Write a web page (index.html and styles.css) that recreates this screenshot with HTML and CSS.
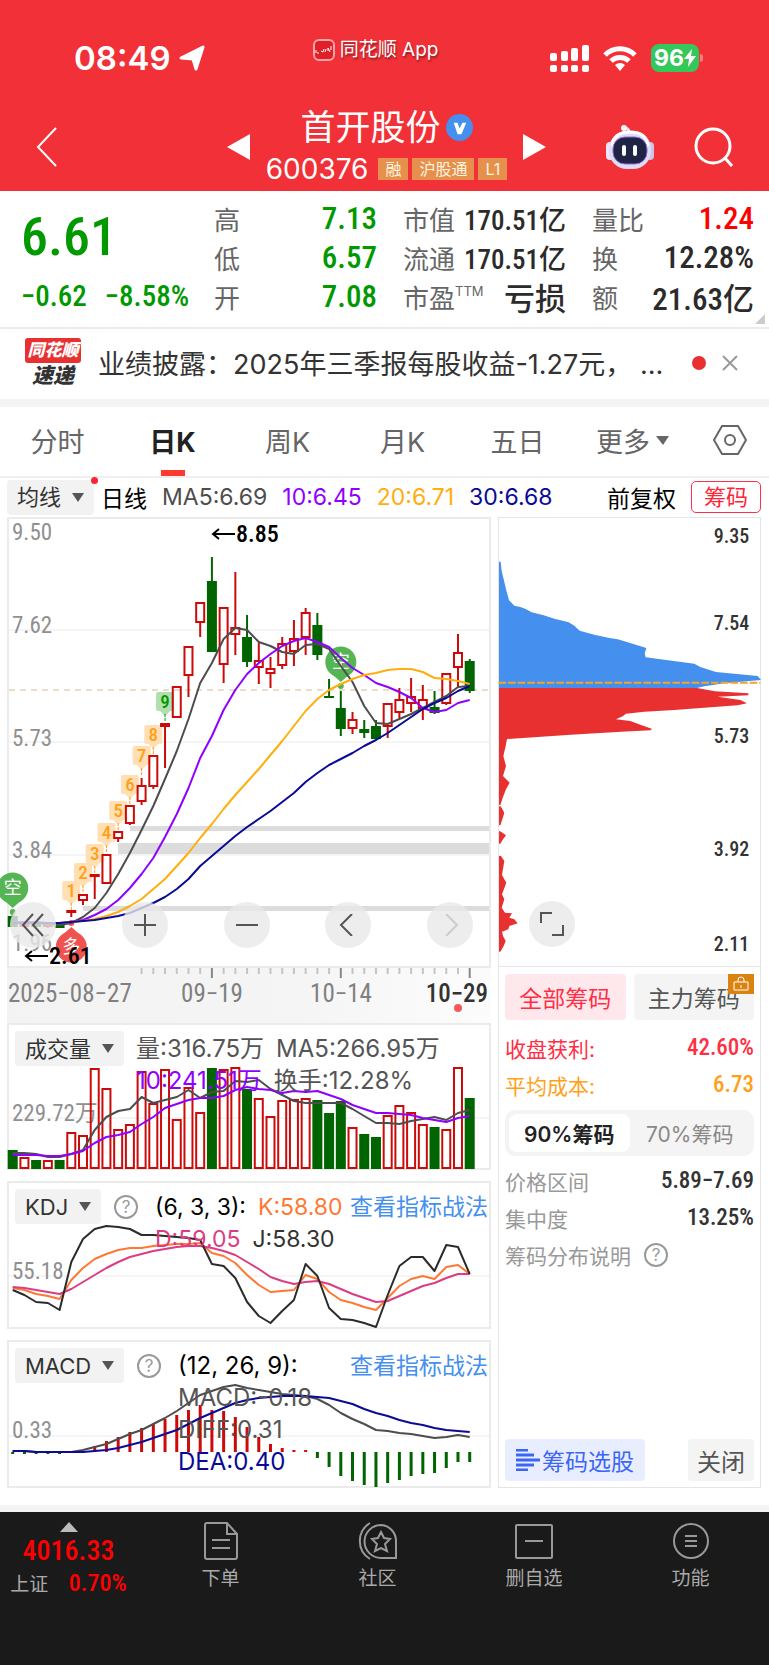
FILE: index.html
```html
<!DOCTYPE html>
<html lang="zh-CN">
<head>
    <meta charset="UTF-8">
    <meta name="viewport" content="width=device-width, initial-scale=1.0">
    <title>首开股份 600376</title>
    <link rel="stylesheet" href="styles.css">
</head>
<body>
    <header class="top">
        <div class="status">
            <div class="clock">08:49
                <svg width="26" height="26" viewBox="0 0 26 26"><path d="M24 2 17 24 14 14 2 13Z" fill="#fff" stroke="#fff" stroke-width="3" stroke-linejoin="round"/></svg>
            </div>
            <div class="app-name">
                <svg width="22" height="22" viewBox="0 0 22 22"><rect x="1" y="1" width="20" height="20" rx="5" fill="#e02028" stroke="#f9a5a8" stroke-width="2"/><path d="M3 14v-3M5 15v-2M8 12l2 1 1-3M12 13l1-3M15 12V9l2 4M18 7v4" stroke="#fff" stroke-width="1" fill="none"/></svg>
                <span>同花顺 App</span>
            </div>
            <div class="status-icons">
                <svg width="39" height="27" viewBox="0 0 39 27" fill="#fff">
                    <rect x="0" y="8" width="7" height="8" rx="2"/><rect x="11" y="6" width="7" height="10" rx="2"/><rect x="21" y="3" width="7" height="13" rx="2"/><rect x="32" y="0" width="7" height="16" rx="2"/>
                    <rect x="0" y="20" width="7" height="7" rx="2"/><rect x="11" y="20" width="7" height="7" rx="2"/><rect x="21" y="20" width="7" height="7" rx="2"/><rect x="32" y="20" width="7" height="7" rx="2"/>
                </svg>
                <svg width="34" height="25" viewBox="0 0 34 25" fill="none" stroke="#fff" stroke-width="5"><path d="M2 9a21 21 0 0 1 30 0"/><path d="M8 15a13 13 0 0 1 18 0"/><path d="M17 25l-5-6a7 7 0 0 1 10 0z" fill="#fff" stroke="none"/></svg>
                <span class="battery">96<svg width="12" height="18" viewBox="0 0 12 18"><path d="M8 0 0 10h5l-1 8 8-11H7z" fill="#fff"/></svg></span>
            </div>
        </div>
        <nav class="title-bar">
            <button class="icon-btn back" aria-label="返回"><svg width="22" height="40" viewBox="0 0 22 40"><path d="M20 1 2 20 20 39" fill="none" stroke="#fff" stroke-width="2"/></svg></button>
            <button class="icon-btn prev" aria-label="上一只"><svg width="23" height="26" viewBox="0 0 23 26"><path d="M23 0v26L0 13z" fill="#fff"/></svg></button>
            <div class="stock">
                <h1>首开股份
                    <svg width="27" height="27" viewBox="0 0 28 28"><circle cx="14" cy="14" r="14" fill="#458fee"/><path d="M8 9h4l2 6 3-6h4l-5 12h-4z" fill="#fff"/></svg>
                </h1>
                <div class="code"><span>600376</span><i>融</i><i>沪股通</i><i>L1</i></div>
            </div>
            <button class="icon-btn next" aria-label="下一只"><svg width="23" height="26" viewBox="0 0 23 26"><path d="M0 0v26l23-13z" fill="#fff"/></svg></button>
            <button class="icon-btn robot" aria-label="智能助手">
                <svg width="48" height="46" viewBox="0 0 48 46">
                    <path d="M23 9c0-3-1-5-4-5" fill="none" stroke="#e7e6f5" stroke-width="3"/><circle cx="18" cy="4" r="3" fill="#f8f7ff"/>
                    <rect x="0" y="18" width="8" height="18" rx="4" fill="#e9e8fa"/><rect x="40" y="18" width="8" height="18" rx="4" fill="#c9c6ea"/>
                    <rect x="3" y="7" width="42" height="38" rx="18" fill="#dfddf3"/><path d="M6 22C7 12 14 8 24 8s17 4 18 14" fill="none" stroke="#fff" stroke-width="3"/>
                    <rect x="7" y="13" width="34" height="27" rx="12" fill="#1f2344" stroke="#8d6be0" stroke-width="1"/>
                    <rect x="16" y="21" width="4" height="11" rx="2" fill="#fff"/><rect x="27" y="21" width="4" height="11" rx="2" fill="#fff"/>
                </svg>
            </button>
            <button class="icon-btn search" aria-label="搜索"><svg width="40" height="40" viewBox="0 0 40 40" fill="none" stroke="#fff" stroke-width="3"><circle cx="19" cy="19" r="17"/><path d="M31 31l7 8"/></svg></button>
        </nav>
    </header>

    <section class="quote">
        <div class="price">
            <strong>6.61</strong>
            <div><span>−0.62</span><span>−8.58%</span></div>
        </div>
        <dl class="down">
            <dt>高</dt><dd>7.13</dd>
            <dt>低</dt><dd>6.57</dd>
            <dt>开</dt><dd>7.08</dd>
        </dl>
        <dl class="cap">
            <dt>市值</dt><dd class="small">170.51亿</dd>
            <dt>流通</dt><dd class="small">170.51亿</dd>
            <dt>市盈<sup>TTM</sup></dt><dd>亏损</dd>
        </dl>
        <dl class="turnover">
            <dt>量比</dt><dd class="up">1.24</dd>
            <dt>换</dt><dd>12.28%</dd>
            <dt>额</dt><dd>21.63亿</dd>
        </dl>
        <span class="corner"></span>
    </section>

    <section class="news">
        <div class="news-logo"><b>同花顺</b><em>速递</em></div>
        <a href="#">业绩披露：2025年三季报每股收益-1.27元， …</a>
        <span class="unread"></span>
        <button class="icon-btn" aria-label="关闭公告"><svg width="16" height="16" viewBox="0 0 16 16"><path d="M1 1l14 14M15 1 1 15" stroke="#999" stroke-width="2"/></svg></button>
    </section>

    <nav class="tabs">
        <button>分时</button>
        <button class="active">日K</button>
        <button>周K</button>
        <button>月K</button>
        <button>五日</button>
        <button class="more">更多<svg width="13" height="9" viewBox="0 0 13 9"><path d="M0 0h13L7 9z" fill="#666"/></svg></button>
        <button class="setting" aria-label="设置"><svg width="34" height="30" viewBox="0 0 34 30" fill="none" stroke="#666" stroke-width="2"><path d="M9 1h16l8 14-8 14H9L1 15z"/><circle cx="17" cy="15" r="5"/></svg></button>
    </nav>

    <div class="ma-bar">
        <label class="picker dot"><select aria-label="主图指标"><option>均线</option></select><svg width="12" height="9" viewBox="0 0 12 9"><path d="M0 0h12L6 9z"/></svg></label>
        <span class="black">日线</span>
        <span class="c-ma5">MA5:6.69</span>
        <span class="c-ma10">10:6.45</span>
        <span class="c-ma20">20:6.71</span>
        <span class="c-ma30">30:6.68</span>
        <span class="black adjust">前复权</span>
        <button class="chip-toggle">筹码</button>
    </div>

    <main class="charts">
        <div class="left">
            <div class="panel">
                <svg id="kline" class="chart" viewBox="0 0 484 451"></svg>
                <div class="zoom-bar">
                    <button aria-label="最早"><svg width="24" height="24" viewBox="0 0 24 24"><path d="M12 1 2 12l10 11M22 1 12 12l10 11"/></svg></button>
                    <button aria-label="放大"><svg width="22" height="22" viewBox="0 0 22 22"><path d="M11 0v22M0 11h22"/></svg></button>
                    <button aria-label="缩小"><svg width="22" height="22" viewBox="0 0 22 22"><path d="M0 11h22"/></svg></button>
                    <button aria-label="向左"><svg width="22" height="22" viewBox="0 0 22 22"><path d="M15 0 4 11l11 11"/></svg></button>
                    <button aria-label="向右" disabled><svg width="22" height="22" viewBox="0 0 22 22"><path d="M7 0l11 11L7 22"/></svg></button>
                </div>
            </div>
            <svg id="axis" class="chart axis" viewBox="0 0 484 55"></svg>

            <div class="panel">
                <svg id="volume" class="chart" viewBox="0 0 484 147"></svg>
                <div class="legend">
                    <label class="picker"><select aria-label="副图指标一"><option>成交量</option></select><svg width="12" height="9" viewBox="0 0 12 9"><path d="M0 0h12L6 9z"/></svg></label>
                    <div class="values">
                        <p><span>量:316.75万</span><span>MA5:266.95万</span></p>
                        <p><span class="c-ma10">10:241.51万</span><span>换手:12.28%</span></p>
                    </div>
                </div>
            </div>

            <div class="panel">
                <svg id="kdj" class="chart" viewBox="0 0 484 148"></svg>
                <div class="legend">
                    <label class="picker"><select aria-label="副图指标二"><option>KDJ</option></select><svg width="12" height="9" viewBox="0 0 12 9"><path d="M0 0h12L6 9z"/></svg></label>
                    <button class="help" aria-label="KDJ说明">?</button>
                    <div class="values compact">
                        <p><span class="black">(6, 3, 3):</span><span class="c-k">K:58.80</span></p>
                        <p><span class="c-d">D:59.05</span><span class="dark">J:58.30</span></p>
                    </div>
                    <a href="#">查看指标战法</a>
                </div>
            </div>

            <div class="panel">
                <svg id="macd" class="chart" viewBox="0 0 484 148"></svg>
                <div class="legend">
                    <label class="picker"><select aria-label="副图指标三"><option>MACD</option></select><svg width="12" height="9" viewBox="0 0 12 9"><path d="M0 0h12L6 9z"/></svg></label>
                    <button class="help" aria-label="MACD说明">?</button>
                    <div class="values">
                        <p><span class="black">(12, 26, 9):</span></p>
                        <p>MACD:-0.18</p>
                        <p>DIFF:0.31</p>
                        <p class="c-ma30">DEA:0.40</p>
                    </div>
                    <a href="#">查看指标战法</a>
                </div>
            </div>
        </div>

        <aside class="chips">
            <div class="chips-chart">
                <svg class="chart" viewBox="24 21 783 1345">
                    <path fill="#458fee" d="M24 152h5l3 28 6 25 7 30 9 33 16 16 18 4 16 6 18 10 36 9 32 10 43 11 17 10 16 15 44 12 45 10 25 4 40 12 46 14-5 16 3 12 56 7 90 12 18 10 47 15 125 12 10 12-110 10-60 9-22 5H24z"/>
                    <path fill="#e83030" d="M24 531h594l54 10 100 6v6l-92 4 68 10 20 10-28 6-100 7-90 7-90 5-55 6-10 8-20 9 43 5 32 12 32 11-2 5-90 4-150 9-100 7-92 6-4 21-7 30 8 30-9 30 20 20-11 20-9 23-8 24h-4z"/>
                    <path fill="#e83030" d="M24 885l6 2 10 18-6 20-6 18h-4zM24 960l6 2 15 11-11 15-6 10h-4zM24 1034l6 1 10 15-7 42 13 23-13 35 7 15-8 25 10 15 21 2-8 13 15 5 10 12-25 8-3 10-19 7 3 13 8 15-6 15-10 17h-4z"/>
                    <path d="M22 515h786" stroke="#f5a32a" stroke-width="6" stroke-dasharray="23 6"/>
                    <g class="chip-scale">
                        <text x="775" y="97">9.35</text>
                        <text x="775" y="357">7.54</text>
                        <text x="775" y="696">5.73</text>
                        <text x="775" y="1034">3.92</text>
                        <text x="775" y="1319">2.11</text>
                    </g>
                </svg>
                <button class="expand" aria-label="全屏"><svg width="24" height="24" viewBox="0 0 24 24"><path d="M1 11V1h11M23 13v10H12"/></svg></button>
            </div>
            <div class="chips-info">
                <div class="kind">
                    <button class="on">全部筹码</button>
                    <button>主力筹码<span class="lock"><svg width="16" height="16" viewBox="0 0 16 16" fill="none" stroke="#fff" stroke-width="1"><path d="M1 6h14v8H1zM5 6V4a3 3 0 0 1 6 0v2M8 9v3"/></svg></span></button>
                </div>
                <div class="row red"><span>收盘获利:</span><b>42.60%</b></div>
                <div class="row orange"><span>平均成本:</span><b>6.73</b></div>
                <div class="segment">
                    <button class="on">90%筹码</button>
                    <button>70%筹码</button>
                </div>
                <div class="row"><span>价格区间</span><b>5.89−7.69</b></div>
                <div class="row"><span>集中度</span><b>13.25%</b></div>
                <div class="row note"><span>筹码分布说明</span><button class="help" aria-label="筹码分布说明">?</button></div>
                <div class="actions">
                    <button class="pick"><svg width="24" height="22" viewBox="0 0 24 22"><path d="M0 1h12M0 6h18M0 11h24M0 16h18M0 21h12" stroke="#3b66f5" stroke-width="3"/></svg>筹码选股</button>
                    <button>关闭</button>
                </div>
            </div>
        </aside>
    </main>

    <footer class="bottom">
        <a href="#" class="index">
            <svg width="18" height="10" viewBox="0 0 18 10"><path d="M9 0l9 10H0z" fill="#bbb"/></svg>
            <strong>4016.33</strong>
            <span>上证 <b>0.70%</b></span>
        </a>
        <a href="#"><svg width="34" height="38" viewBox="0 0 34 38"><path d="M3 1h20l10 11v23q0 2-2 2H3q-2 0-2-2V3q0-2 2-2zM23 1v11h10M8 18h18M8 26h18"/></svg>下单</a>
        <a href="#"><svg width="40" height="38" viewBox="0 0 40 38"><path d="M23 3a16 16 0 0 0 0 33h15V19A16 16 0 0 0 23 3zM12 1a21 21 0 0 0 0 36M23 10l3 6 6 1-5 5 2 7-6-3-6 3 2-7-5-5 6-1z"/></svg>社区</a>
        <a href="#"><svg width="38" height="38" viewBox="0 0 38 38"><rect x="1" y="3" width="36" height="33" rx="1"/><path d="M10 19h18"/></svg>删自选</a>
        <a href="#"><svg width="38" height="38" viewBox="0 0 38 38"><circle cx="19" cy="19" r="17"/><path d="M13 14h12M13 19h12M13 24h12"/></svg>功能</a>
    </footer>
    <script src="charts.js"></script>
</body>
</html>
```
FILE: styles.css
```css
* {
    box-sizing: border-box;
}

:root {
    --num: "Liberation Sans Narrow", "Roboto Condensed", Roboto, "Noto Sans CJK SC", sans-serif;
    --red: #f23037;
    --line: #ebebeb;
}

body {
    margin: 0;
    background: #fff;
    color: #333;
    font-family: Inter, "Noto Sans CJK SC", sans-serif;
    font-size: 22px;
}

button, select {
    font: inherit;
    color: inherit;
    border: 0;
    margin: 0;
    padding: 0;
    background: none;
    cursor: pointer;
}

a {
    color: inherit;
    text-decoration: none;
}

h1, p, dl, dd {
    margin: 0;
}

svg {
    flex: none;
}

/* header */
.top {
    background: var(--red);
    color: #fff;
    padding-top: 36px;
}

.status {
    display: grid;
    grid-template-columns: 240fr auto 262fr;
    height: 44px;
    padding: 0 70px 0 74px;
}

.clock {
    display: flex;
    align-items: center;
    gap: 8px;
    font-size: 33px;
    font-weight: 600;
}

.app-name {
    display: flex;
    gap: 5px;
    align-items: center;
    align-self: start;
    font-size: 19px;
    line-height: 28px;
    text-shadow: 1px 2px 2px rgba(0, 0, 0, 0.4);
}

.status-icons {
    display: flex;
    align-items: center;
    justify-content: flex-end;
    gap: 14px;
}

.battery {
    position: relative;
    display: flex;
    align-items: center;
    justify-content: center;
    width: 48px;
    height: 28px;
    border-radius: 8px;
    background: #34c759;
    font-size: 23px;
    font-weight: 700;
}

.battery::after {
    content: "";
    position: absolute;
    right: -4px;
    width: 3px;
    height: 8px;
    border-radius: 0 3px 3px 0;
    background: #f77a7e;
}

.title-bar {
    display: flex;
    align-items: center;
    height: 111px;
    padding: 23px 35px 0 36px;
}

.icon-btn {
    display: flex;
    align-items: center;
}

.prev {
    margin-left: auto;
}

.stock {
    width: 273px;
    display: flex;
    flex-direction: column;
    align-items: center;
}

.stock h1 {
    display: flex;
    align-items: center;
    gap: 5px;
    font-size: 35px;
    font-weight: 400;
    line-height: 43px;
}

.code {
    display: flex;
    align-items: center;
    gap: 4px;
    font-size: 28px;
    line-height: 40px;
}

.code span {
    margin-right: 6px;
}

.code i {
    padding: 0 7px;
    background: #e5914d;
    color: #fff3df;
    font-size: 16px;
    font-style: normal;
    line-height: 22px;
}

.robot {
    margin-left: 60px;
    margin-right: 40px;
}

/* quote */
.quote {
    position: relative;
    display: grid;
    grid-template-columns: 167fr 163fr 163fr 162fr;
    column-gap: 26px;
    padding: 8px 15px 10px 21px;
    border-bottom: 2px solid var(--line);
    height: 138px;
}

.price {
    color: #090;
    font-family: var(--num);
    display: flex;
    flex-direction: column;
    min-width: 0;
    white-space: nowrap;
}

.price strong {
    font-size: 54px;
    font-weight: 500;
    line-height: 76px;
}

.price div {
    display: flex;
    gap: 18px;
    font-size: 29px;
    font-weight: 500;
    line-height: 42px;
}

.quote dl {
    display: grid;
    grid-template-columns: auto 1fr;
    grid-auto-rows: 39px;
    align-items: center;
    min-width: 0;
    white-space: nowrap;
}

.quote dt {
    color: #666;
    font-size: 26px;
}

.quote sup {
    margin-right: -30px;
    font-size: 13px;
    line-height: 1px;
    vertical-align: 12px;
}

.quote dd {
    text-align: right;
    font-family: var(--num);
    font-size: 31px;
    font-weight: 500;
    color: #2b2b2b;
}

.quote .small {
    font-size: 27px;
}

.quote .down dd {
    color: #090;
}

.quote .up {
    color: #f00;
}

.corner {
    position: absolute;
    right: 4px;
    bottom: 3px;
    border-left: 10px solid transparent;
    border-bottom: 10px solid #ccc;
}

/* news */
.news {
    display: flex;
    align-items: center;
    height: 78px;
    padding: 0 31px 3px 25px;
    border-bottom: 8px solid #f4f4f4;
}

.news-logo {
    width: 56px;
    margin-right: 17px;
    text-align: center;
    line-height: 25px;
}

.news-logo b {
    display: block;
    background: #e83030;
    border-radius: 3px;
    color: #fff;
    font-size: 17px;
    font-style: italic;
    font-weight: 900;
}

.news-logo em {
    font-size: 21px;
    font-weight: 900;
}

.news a {
    flex: 1;
    font-size: 27px;
    white-space: nowrap;
}

.unread {
    width: 14px;
    height: 14px;
    border-radius: 50%;
    background: #e83030;
    margin: 0 16px 0 23px;
}

/* tabs */
.tabs {
    display: flex;
    align-items: center;
    height: 71px;
    border-bottom: 2px solid #f0f0f0;
    color: #666;
    font-size: 27px;
}

.tabs button {
    flex: 1 1 115px;
    height: 100%;
    padding-bottom: 3px;
}

.tabs .active {
    color: #222;
    font-weight: 700;
    background: linear-gradient(#ff3b30, #ff3b30) center bottom / 24px 6px no-repeat;
}

.tabs .more {
    display: flex;
    align-items: center;
    justify-content: center;
    gap: 6px;
}

.tabs .setting {
    flex: 0 1 79px;
}

.tabs .setting svg {
    display: block;
    margin: auto;
}

/* indicator line above the chart */
.ma-bar {
    display: flex;
    align-items: center;
    gap: 15px;
    height: 39px;
    padding: 0 8px 1px 7px;
    white-space: nowrap;
}

.ma-bar span {
    font-size: 23px;
}

.ma-bar .picker {
    margin-right: -8px;
}

.adjust {
    margin-left: auto;
}

.picker {
    display: flex;
    align-items: center;
    height: 35px;
    padding: 0 10px;
    gap: 10px;
    border-radius: 4px;
    background: #f2f2f2;
    color: #333;
}

.picker select {
    appearance: none;
}

.picker svg {
    fill: #555;
}

.dot {
    position: relative;
}

.dot::after {
    content: "";
    position: absolute;
    top: -3px;
    right: -4px;
    width: 7px;
    height: 7px;
    border-radius: 50%;
    background: #ff2436;
}

.chip-toggle {
    height: 32px;
    padding: 0 12px;
    border: 1px solid #ff2e4a;
    border-radius: 5px;
    color: #ff2436;
    line-height: 28px;
}

.black { color: #000; }
.dark { color: #333; }
.c-ma5 { color: #4d4d4d; }
.c-ma10 { color: #9000ff; }
.c-ma20 { color: #ffae0d; }
.c-ma30 { color: #0a0a96; }
.c-k { color: #ff7733; }
.c-d { color: #dc3c82; }

/* charts */
.charts {
    display: grid;
    grid-template-columns: 484fr 263fr;
    gap: 7px;
    padding: 0 8px 17px 7px;
}

.left {
    min-width: 0;
}

.panel {
    position: relative;
    display: grid;
    box-shadow: inset 0 0 0 2px var(--line);
    margin-bottom: 11px;
}

.panel:first-child, .panel:last-child {
    margin-bottom: 0;
}

.panel > * {
    grid-area: 1 / 1;
    min-width: 0;
}

.chart {
    display: block;
    width: 100%;
    height: auto;
    overflow: visible;
    font-family: var(--num);
}

.axis {
    background: linear-gradient(to right, #f3f3f3, #f5f5f5 60%, #fcfcfc);
}

.scale {
    fill: #909090;
    font-size: 23px;
}

.mark {
    fill: #000;
    font-size: 24px;
    font-weight: 500;
}

.date {
    fill: #808080;
    font-size: 25px;
}

.date.now {
    fill: #333;
    font-weight: 500;
}

.badge {
    font-size: 19px;
    font-weight: 500;
    text-anchor: middle;
}

.pin {
    fill: #fff;
    font-family: "Noto Sans CJK SC", sans-serif;
    font-size: 18px;
    text-anchor: middle;
}

.zoom-bar {
    position: absolute;
    left: 3px;
    right: 18px;
    bottom: 20px;
    display: flex;
    justify-content: space-between;
}

.zoom-bar button, .expand {
    display: flex;
    align-items: center;
    justify-content: center;
    width: 46px;
    height: 46px;
    border-radius: 50%;
    background: rgba(232, 232, 232, 0.8);
}

.zoom-bar button:first-child {
    margin-right: 10px;
}

.zoom-bar path, .expand path {
    fill: none;
    stroke: #555;
    stroke-width: 2;
}

.zoom-bar button:disabled path {
    stroke: #ccc;
}

.legend {
    display: flex;
    align-items: flex-start;
    padding: 8px 3px 0 8px;
    white-space: nowrap;
    color: #555;
}

.values {
    margin-left: 12px;
    font-size: 24px;
    line-height: 32px;
    padding-top: 2px;
}

.values.compact {
    font-size: 23px;
}

.values p {
    display: flex;
    gap: 12px;
}

.help {
    width: 24px;
    height: 24px;
    border: 2px solid #999;
    border-radius: 50%;
    color: #999;
    font-size: 17px;
    line-height: 20px;
}

.legend .help {
    margin: 6px 5px 0 13px;
}

.legend a {
    margin-left: auto;
    color: #458fee;
    font-size: 23px;
    line-height: 37px;
}

/* chip distribution */
.chips {
    display: flex;
    flex-direction: column;
    border: 1px solid #e5e5e5;
}

.chips-chart {
    position: relative;
    border-bottom: 1px solid #e5e5e5;
}

.chip-scale {
    fill: #333;
    font-size: 60px;
    font-weight: 500;
    text-anchor: end;
}

.expand {
    position: absolute;
    left: 30px;
    bottom: 19px;
}

.chips-info {
    flex: 1;
    display: flex;
    flex-direction: column;
    padding: 7px 6px 6px;
    font-size: 21px;
}

.kind, .actions {
    display: flex;
    gap: 8px;
    margin-bottom: 9px;
}

.kind button, .actions button {
    position: relative;
    height: 46px;
    border-radius: 4px;
    background: #f4f4f4;
    color: #555;
    font-size: 23px;
}

.kind button {
    flex: 1;
}

.kind .on {
    background: #ffe8eb;
    color: #ff2e44;
}

.lock {
    position: absolute;
    right: 0;
    top: 0;
    display: flex;
    align-items: center;
    justify-content: center;
    width: 26px;
    height: 20px;
    background: #d98310;
}

.row {
    display: flex;
    align-items: center;
    justify-content: space-between;
    height: 37px;
    color: #999;
}

.row b {
    color: #333;
    font-family: var(--num);
    font-size: 23px;
    font-weight: 500;
}

.red, .red b {
    color: #ff2e44;
}

.orange, .orange b {
    color: #ff9f1a;
}

.note {
    justify-content: flex-start;
    gap: 13px;
}

.segment {
    display: flex;
    margin: 7px 0 6px;
    padding: 4px;
    border-radius: 10px;
    background: #f4f4f4;
    color: #888;
}

.segment button {
    flex: 1;
    height: 38px;
    border-radius: 8px;
    white-space: nowrap;
}

.segment .on {
    background: #fff;
    color: #222;
    font-weight: 600;
}

.actions {
    justify-content: space-between;
    margin: auto 0 0;
}

.actions button {
    height: 42px;
    padding: 0 9px;
    font-size: 24px;
}

.actions .pick {
    display: flex;
    align-items: center;
    gap: 2px;
    padding: 0 11px;
    background: #e8eeff;
    color: #3b66f5;
    font-size: 23px;
}

/* bottom bar */
.bottom {
    display: grid;
    grid-template-columns: 142fr 157fr 157fr 156fr 157fr;
    border-top: 7px solid #f4f4f4;
    height: 160px;
    background: #1a1a1a;
    color: #aaa;
    font-size: 19px;
}

.bottom a {
    display: flex;
    flex-direction: column;
    align-items: center;
    padding-top: 10px;
    gap: 5px;
    line-height: 28px;
}

.bottom a:not(.index) path, .bottom rect, .bottom circle {
    fill: none;
    stroke: #999;
    stroke-width: 2;
}

.bottom .index {
    gap: 0;
    padding-right: 5px;
}

.index strong, .index b {
    color: #f00;
    font-family: var(--num);
    font-weight: 500;
}

.index strong {
    font-size: 28px;
    line-height: 37px;
}

.index b {
    margin-left: 15px;
    font-size: 24px;
}
```
FILE: charts.js
```js
const STEP = 11.718;
const x = i => 5.7 + STEP * i;
const RED = '#cc0a0a';
const GREEN = '#006400';

// [high, body top, body bottom, low, falling]
const candles = [
    [397, 399, 410, 410, 1], [407, 407, 409, 409], [407, 407, 410, 410, 1], [407, 407, 409, 411], [407, 407, 411, 411, 1],
    [393, 394, 395, 400], [377, 378, 383, 388], [358, 358, 359, 382], [337, 338, 366, 367], [314, 315, 321, 325],
    [288, 289, 306, 308], [261, 269, 284, 288], [238, 239, 269, 272], [206, 207, 209, 251], [169, 170, 200, 201],
    [129, 130, 158, 180], [86, 86, 105, 120], [40, 64, 135, 135, 1], [91, 91, 147, 166], [55, 111, 117, 138],
    [98, 120, 145, 150, 1], [126, 144, 150, 167], [140, 152, 156, 171], [120, 127, 148, 152], [103, 122, 134, 149],
    [91, 96, 120, 138], [96, 108, 138, 143, 1], [162, 179, 181, 181, 1], [174, 191, 212, 219, 1], [195, 203, 211, 217],
    [203, 212, 216, 221, 1], [203, 209, 222, 222, 1], [186, 187, 209, 221], [171, 183, 195, 201], [161, 180, 186, 195],
    [168, 183, 191, 203], [174, 190, 196, 197, 1], [157, 157, 186, 188], [117, 136, 150, 170], [142, 144, 174, 176, 1]
];

const ma5 = [405, 405, 406, 407, 408, 406, 400, 391, 376, 357, 336, 313, 289, 262, 234, 202, 166, 146, 122, 111, 113, 125, 129, 135, 137, 128, 127, 132, 149, 165, 189, 206, 207, 202, 197, 191, 185, 179, 170, 169];
const ma10 = [405, 405, 405, 406, 406, 405, 403, 398, 392, 383, 371, 357, 341, 320, 297, 271, 241, 219, 193, 173, 157, 146, 137, 129, 124, 121, 125, 130, 141, 151, 158, 166, 170, 175, 181, 191, 195, 193, 186, 183];
const ma20 = [406, 406, 406, 406, 406, 405, 404, 402, 399, 395, 389, 382, 372, 362, 349, 336, 321, 307, 292, 278, 265, 252, 238, 224, 209, 194, 182, 173, 167, 162, 158, 156, 153, 152, 152, 155, 161, 162, 164, 167];
const ma30 = [406, 406, 406, 406, 406, 405, 404, 403, 401, 399, 396, 391, 386, 380, 372, 362, 349, 339, 329, 319, 310, 302, 294, 285, 276, 265, 256, 248, 242, 236, 229, 223, 216, 208, 200, 192, 186, 181, 174, 169];

const volumes = [127, 134, 137, 137, 137, 109, 112, 45, 65, 106, 101, 48, 80, 46, 96, 64, 89, 45, 46, 44, 66, 75, 93, 77, 76, 75, 77, 90, 78, 104, 111, 114, 92, 82, 89, 101, 104, 106, 44, 75];
const vol5 = [130, 130, 131, 134, 134, 131, 127, 107, 94, 88, 86, 74, 80, 77, 74, 67, 75, 69, 68, 58, 59, 57, 66, 72, 78, 80, 80, 80, 80, 86, 93, 100, 100, 101, 98, 96, 94, 97, 90, 87];
const vol10 = [132, 132, 132, 133, 133, 131, 128, 120, 114, 112, 109, 101, 94, 85, 81, 77, 75, 75, 73, 67, 64, 66, 67, 70, 68, 69, 68, 72, 76, 82, 86, 90, 90, 91, 92, 95, 97, 99, 95, 93];

const lineK = [107, 109, 113, 115, 118, 99, 87, 78, 73, 69, 67, 67, 65, 64, 63, 63, 62, 72, 75, 82, 94, 104, 111, 110, 109, 94, 98, 111, 119, 122, 126, 129, 117, 105, 98, 95, 98, 86, 84, 93];
const lineD = [106, 107, 109, 111, 113, 108, 101, 94, 87, 81, 76, 73, 70, 68, 66, 65, 65, 67, 70, 74, 81, 88, 96, 100, 103, 101, 100, 103, 108, 113, 117, 121, 120, 115, 110, 105, 102, 97, 93, 93];
const lineJ = [109, 114, 121, 122, 129, 81, 58, 48, 45, 46, 48, 54, 54, 55, 56, 57, 59, 83, 85, 97, 121, 135, 142, 130, 119, 83, 95, 127, 138, 139, 142, 146, 114, 85, 76, 76, 90, 64, 66, 93];

const ZERO = 112;
const macdBars = [114, 114, 114, 114, 114, 113, 111, 106, 101, 97, 92, 88, 84, 79, 75, 70, 65, 70, 71, 77, 87, 97, 104, 108, 110, 110, 118, 127, 136, 141, 145, 147, 143, 140, 136, 134, 133, 128, 122, 122];
const diff = [111, 111, 112, 112, 112, 112, 110, 107, 104, 99, 94, 90, 84, 78, 71, 63, 55, 51, 47, 45, 48, 50, 52, 54, 55, 56, 59, 65, 73, 79, 84, 90, 91, 93, 94, 96, 98, 97, 95, 97];
const dea = [111, 111, 112, 112, 112, 112, 112, 111, 110, 108, 105, 102, 98, 94, 90, 84, 78, 73, 68, 63, 60, 58, 57, 56, 56, 56, 57, 58, 61, 64, 69, 73, 76, 80, 83, 85, 88, 90, 91, 92];

const rect = (left, top, w, h, attrs) => `<rect x="${left}" y="${top}" width="${w}" height="${h}" ${attrs}/>`;
const vline = (cx, y1, y2, color, w = 2) => `<path d="M${cx} ${y1}V${y2}" stroke="${color}" stroke-width="${w}"/>`;
const hline = (y, attrs = 'stroke="#ebebeb"') => `<path d="M2 ${y}H482" ${attrs}/>`;
const text = (left, y, cls, value, attrs = '') => `<text x="${left}" y="${y}" class="${cls}" ${attrs}>${value}</text>`;

function curve(values, color) {
    const points = values.map((v, i) => `${x(i).toFixed(1)},${v}`).join(' ');
    return `<polyline points="${points}" fill="none" stroke="${color}" stroke-width="2" stroke-linejoin="round"/>`;
}

function candle([high, top, bottom, low, falling], i) {
    const color = falling ? GREEN : RED;
    if (falling) {
        return vline(x(i), high, low, color) + rect(x(i) - 5, top, 10, bottom - top, `fill="${color}"`);
    }
    return vline(x(i), high, top, color) + vline(x(i), bottom, low, color)
        + rect(x(i) - 4, top, 8, bottom - top, `fill="none" stroke="${color}" stroke-width="2"`);
}

function badge(i, top, n) {
    const bg = n === 9 ? '#b0dfb0' : '#ffdfb3';
    const fg = n === 9 ? '#090' : '#ff9f1a';
    const cx = x(i);
    return `<g>${rect(cx - 9, top, 18, 19, `rx="2" fill="${bg}"`)}
        <path d="M${cx - 5} ${top + 19}h10l-5 5z" fill="${bg}"/>
        <path d="M${cx} ${top + 22}v8" stroke="${fg}" stroke-dasharray="3 1"/>
        ${text(cx, top + 16, 'badge', n, `fill="${fg}"`)}</g>`;
}

function pin(i, cy, color, label, dir) {
    const cx = x(i);
    return `<circle cx="${cx}" cy="${cy}" r="15.5" fill="${color}"/>
        <path d="M${cx - 9} ${cy + 12 * dir}h18l-9 ${8 * dir}z" fill="${color}"/>
        <circle cx="${cx}" cy="${cy + 24 * dir}" r="3" fill="${color}"/>${text(cx, cy + 6, 'pin', label)}`;
}

function arrow(left, y) {
    return `<path d="M${left + 22} ${y}H${left}M${left + 6} ${y - 5}l-6 5 6 5" fill="none" stroke="#000" stroke-width="2"/>`;
}

function drawKline() {
    const prices = [['9.50', 23], ['7.62', 116], ['5.73', 229], ['3.84', 341], ['1.96', 434]];
    const counts = [364, 346, 327, 306, 284, 258, 229, 208, 175];
    document.getElementById('kline').innerHTML =
        hline(113) + hline(225) + hline(338)
        + rect(123, 309, 359, 5, 'fill="#dcdcdc"') + rect(111, 326, 371, 11, 'fill="#dcdcdc"') + rect(76, 389, 406, 5, 'fill="#dcdcdc"')
        + hline(173, 'stroke="#d6bb94" stroke-dasharray="6 5"')
        + prices.map(([p, y]) => text(5, y, 'scale', p)).join('')
        + counts.map((top, i) => badge(i + 5, top, i + 1)).join('')
        + candles.map(candle).join('')
        + pin(28, 145, '#55b555', '空', 1) + pin(0, 371, '#55b555', '空', 1) + pin(5, 430, '#ef5350', '多', -1)
        + curve(ma5, '#4d4d4d') + curve(ma10, '#9000ff') + curve(ma20, '#ffae0d') + curve(ma30, '#0a0a96')
        + arrow(206, 17) + text(229, 25, 'mark', '8.85')
        + arrow(19, 439) + text(42, 447, 'mark', '2.61');
}

function drawAxis() {
    let out = '';
    for (let i = 11; i < 40; i++) {
        const major = (i - 17) % 11 === 0;
        out += vline(x(i), 0, major ? 10 : 6, major ? '#888' : '#c4c4c4');
    }
    out += text(1, 34, 'date', '2025−08−27') + text(205, 34, 'date', '09−19', 'text-anchor="middle"')
        + text(334, 34, 'date', '10−14', 'text-anchor="middle"') + text(481, 34, 'date now', '10−29', 'text-anchor="end"')
        + '<circle cx="451" cy="40" r="4" fill="#f55b5b"/>';
    document.getElementById('axis').innerHTML = out;
}

function drawVolume() {
    document.getElementById('volume').innerHTML = hline(95) + text(5, 98, 'scale', '229.72万')
        + volumes.map((top, i) => candles[i][4]
            ? rect(x(i) - 5, top, 10, 146 - top, `fill="${GREEN}"`)
            : rect(x(i) - 4, top + 1, 8, 144 - top, `fill="none" stroke="${RED}" stroke-width="2"`)).join('')
        + curve(vol5, '#4d4d4d') + curve(vol10, '#9000ff');
}

function drawKdj() {
    document.getElementById('kdj').innerHTML = hline(95) + text(5, 98, 'scale', '55.18')
        + curve(lineK, '#ff7733') + curve(lineD, '#dc3c82') + curve(lineJ, '#2b2b2b');
}

function drawMacd() {
    document.getElementById('macd').innerHTML = hline(96) + text(5, 98, 'scale', '0.33')
        + macdBars.map((v, i) => vline(x(i), ZERO, v, v > ZERO ? GREEN : RED, 3)).join('')
        + curve(diff, '#4d4d4d') + curve(dea, '#0a0a96');
}

drawKline();
drawAxis();
drawVolume();
drawKdj();
drawMacd();
```
